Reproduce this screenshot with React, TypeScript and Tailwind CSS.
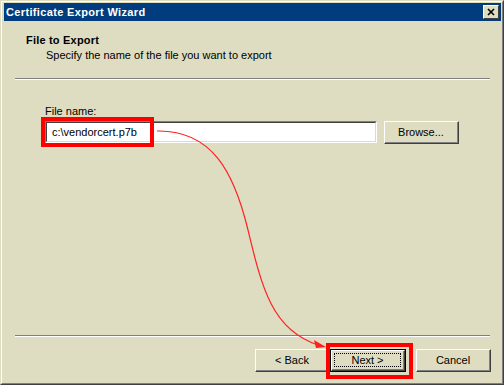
import React from "react";

const font = { fontFamily: '"Liberation Sans", Arial, sans-serif' };

function Button({ label, isDefault = false }: { label: string; isDefault?: boolean }) {
  if (isDefault) {
    return (
      <div className="h-[23px] w-[76px] border border-black">
        <div className="h-full w-full border-t border-l border-white border-r border-b border-r-[#404040] border-b-[#404040]">
          <div className="flex h-full w-full items-center justify-center border-r border-b border-[#808080] p-[2px]">
            <div className="flex h-full w-full items-center justify-center border border-dotted border-black text-[11px] text-black">
              {label}
            </div>
          </div>
        </div>
      </div>
    );
  }
  return (
    <div className="h-[23px] w-[75px] border-t border-l border-white border-r border-b border-r-[#404040] border-b-[#404040]">
      <div className="flex h-full w-full items-center justify-center border-r border-b border-[#808080] text-[11px] text-black">
        {label}
      </div>
    </div>
  );
}

export default function App() {
  return (
    <div className="relative h-[385px] w-[504px] overflow-hidden bg-[#DEDCC1]" style={font}>
      {/* window frame */}
      <div className="flex h-full w-full flex-col border-t border-l border-[#DEDCC1] border-r border-b border-r-[#404040] border-b-[#404040]">
        <div className="flex h-full w-full flex-col border-t border-l border-white border-r border-b border-r-[#808080] border-b-[#808080] pt-[1px] pl-[2px] pr-[1px]">
          {/* title bar */}
          <div className="flex h-[18px] shrink-0 items-center justify-between bg-[#013D7E] pl-[2px] pr-[2px]">
            <span className="text-[11px] font-bold tracking-[0.35px] text-white">Certificate Export Wizard</span>
            <div className="h-[14px] w-[16px] border-t border-l border-white border-r border-b border-r-[#404040] border-b-[#404040] bg-[#DEDCC1]">
              <svg width="14" height="12" viewBox="0 0 14 12" className="block">
                <path d="M4 3 L10 9 M10 3 L4 9" stroke="black" strokeWidth="1.6" />
              </svg>
            </div>
          </div>

          {/* header */}
          <div className="h-[57px] shrink-0 pt-[12px] pl-[22px] text-[11px] text-black">
            <div className="font-bold tracking-[0.2px] leading-[14px]">File to Export</div>
            <div className="ml-[20px] leading-[14px] mt-[1px]">Specify the name of the file you want to export</div>
          </div>
          <div className="ml-[11px] w-[475px] shrink-0 border-t border-[#808080] border-b border-b-white" />

          {/* body */}
          <div className="flex-1 pt-[24px] pl-[41px]">
            <div className="text-[11px] leading-[14px] text-black">File name:</div>
            <div className="mt-[3px] flex gap-[7px]">
              <div className="h-[22px] w-[332px] border-t border-l border-[#808080] border-r border-b border-r-white border-b-white">
                <div className="flex h-full w-full items-center border-t border-l border-[#404040] border-r border-b border-r-[#DEDCC1] border-b-[#DEDCC1] bg-white pl-[5px] text-[11px] text-black">
                  c:\vendorcert.p7b
                </div>
              </div>
              <Button label="Browse..." />
            </div>
          </div>

          <div className="ml-[11px] w-[475px] shrink-0 border-t border-[#808080] border-b border-b-white" />

          {/* buttons */}
          <div className="flex h-[46px] shrink-0 items-start pt-[12px] pl-[251px]">
            <Button label="< Back" />
            <Button label="Next >" isDefault />
            <div className="ml-[10px]">
              <Button label="Cancel" />
            </div>
          </div>
        </div>
      </div>

      {/* annotations */}
      <div className="absolute left-[41px] top-[117px] h-[30px] w-[113px] border-[4px] border-[#FF0000]" />
      <div className="absolute left-[326px] top-[343px] h-[36px] w-[87px] border-[4px] border-[#FF0000]" />
      <svg className="absolute left-0 top-0" width="504" height="385" viewBox="0 0 504 385">
        <path
          d="M157 131 C 212 130 234 172 248 230 S 272 330 318 345"
          fill="none"
          stroke="#FF2020"
          strokeWidth="1.2"
        />
        <path d="M326 347 L314 340 L316 348 Z" fill="#FF2020" />
      </svg>
    </div>
  );
}
